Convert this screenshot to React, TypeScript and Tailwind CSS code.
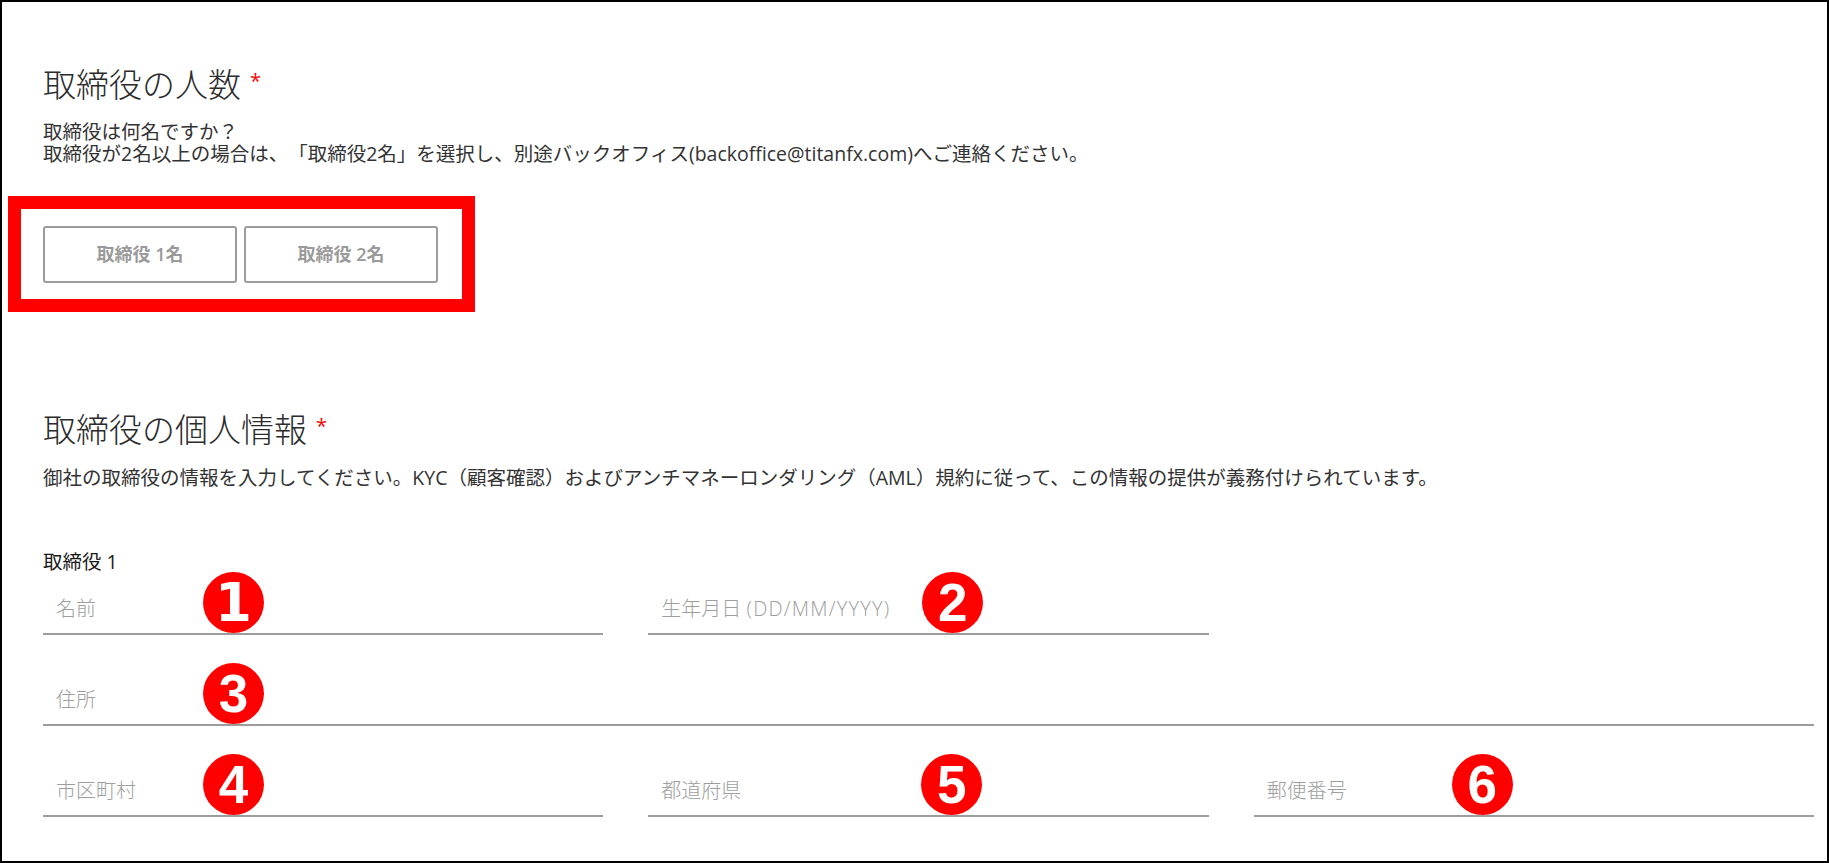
import React from "react";

function Badge({ n, left }: { n: string; left: string }) {
  const font = n === "1" ? "font-['DejaVu_Sans',sans-serif]" : "font-['Liberation_Sans',Arial,sans-serif]";
  return (
    <div
      className={`pointer-events-none absolute bottom-0 z-10 flex h-[61px] w-[61px] items-center justify-center rounded-full bg-[#ff0000] ${left}`}
    >
      <span className={`${font} text-[53px] font-bold leading-none text-white`}>{n}</span>
    </div>
  );
}

function Field({
  placeholder,
  badge,
  badgeLeft,
  className = "",
}: {
  placeholder: React.ReactNode;
  badge: string;
  badgeLeft: string;
  className?: string;
}) {
  return (
    <div className={`relative h-[49px] border-b-2 border-[#9c9c9c] pl-[13px] pt-[11px] ${className}`}>
      <span className="text-[20px] font-light leading-[24px] text-[#9e9e9e]">{placeholder}</span>
      <Badge n={badge} left={badgeLeft} />
    </div>
  );
}

function Title({ children }: { children: React.ReactNode }) {
  return (
    <h2 className="flex items-start text-[33px] font-light leading-[40px] text-[#2b2b2b]">
      <span>{children}</span>
      <span className="ml-[9px] mt-[6px] font-normal text-[20px] leading-[20px] text-[#ff0000]">*</span>
    </h2>
  );
}

export default function App() {
  return (
    <div className="box-border h-[863px] w-[1829px] overflow-hidden border-2 border-black bg-white font-['Open_Sans','Noto_Sans_CJK_JP',sans-serif] text-[#333] [text-spacing-trim:space-all]">
      <div className="pl-[41px] pt-[63px]">
        <section>
          <Title>取締役の人数</Title>
          <p className="mt-[16px] text-[19.5px] leading-[22px] text-[#333]">
            取締役は何名ですか？
            <br />
            取締役が2名以上の場合は、「取締役2名」を選択し、別途バックオフィス(backoffice@titanfx.com)へご連絡ください。
          </p>
          <div className="relative mt-[61px] flex w-fit gap-[7px]">
            <div className="pointer-events-none absolute -bottom-[29px] -left-[35px] -right-[37px] -top-[30px] border-[13px] border-[#ff0000]" />
            <button className="h-[57px] w-[194px] rounded-[3px] border-2 border-[#9c9c9c] bg-white text-[18px] font-semibold text-[#9a9a9a]">
              取締役 1名
            </button>
            <button className="h-[57px] w-[194px] rounded-[3px] border-2 border-[#9c9c9c] bg-white text-[18px] font-semibold text-[#9a9a9a]">
              取締役 2名
            </button>
          </div>
        </section>

        <section className="mt-[127px]">
          <Title>取締役の個人情報</Title>
          <p className="mt-[17px] text-[19.5px] leading-[22px] text-[#333]">
            御社の取締役の情報を入力してください。KYC（顧客確認）およびアンチマネーロンダリング（AML）規約に従って、この情報の提供が義務付けられています。
          </p>
          <div className="mt-[61px] text-[19.5px] leading-[24px] text-[#1a1a1a]">取締役 1</div>
          <div className="mt-[12px] grid w-[1771px] grid-cols-3 gap-x-[45px] gap-y-[42px]">
            <Field placeholder="名前" badge="1" badgeLeft="left-[160px]" />
            <Field
              placeholder={
                <>
                  生年月日 <span className="tracking-[1.2px]">(DD/MM/YYYY)</span>
                </>
              }
              badge="2"
              badgeLeft="left-[274px]"
            />
            <div />
            <Field placeholder="住所" badge="3" badgeLeft="left-[160px]" className="col-span-3" />
            <Field placeholder="市区町村" badge="4" badgeLeft="left-[160px]" />
            <Field placeholder="都道府県" badge="5" badgeLeft="left-[273px]" />
            <Field placeholder="郵便番号" badge="6" badgeLeft="left-[198px]" />
          </div>
        </section>
      </div>
    </div>
  );
}
